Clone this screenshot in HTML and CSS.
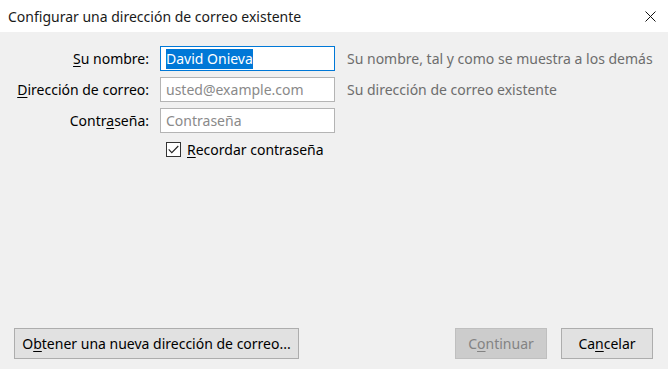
FILE: index.html
```html
<!DOCTYPE html>
<html lang="es">
<head>
    <meta charset="UTF-8">
    <title>Configurar una dirección de correo existente</title>
    <link rel="stylesheet" href="styles.css">
</head>
<body>
    <div class="dialog">
        <div class="dialog-title">
            <span>Configurar una dirección de correo existente</span>
            <button class="close-btn" aria-label="Cerrar">
                <svg width="11" height="11" viewBox="0 0 11 11">
                    <path d="M0.5 0.5 L10.5 10.5 M10.5 0.5 L0.5 10.5" stroke="#111" stroke-width="1" fill="none"/>
                </svg>
            </button>
        </div>

        <div class="dialog-body">
            <div class="account-form">
                <label class="field-label"><u>S</u>u nombre:</label>
                <div class="text-input focused"><span class="selection">David Onieva</span></div>
                <div class="field-hint">Su nombre, tal y como se muestra a los demás</div>

                <label class="field-label"><u>D</u>irección de correo:</label>
                <div class="text-input placeholder">usted@example.com</div>
                <div class="field-hint">Su dirección de correo existente</div>

                <label class="field-label">Contr<u>a</u>seña:</label>
                <div class="text-input placeholder">Contraseña</div>
                <div></div>

                <div></div>
                <label class="remember">
                    <span class="checkbox">
                        <svg width="11" height="9" viewBox="0 0 11 9">
                            <path d="M0.7 4.4 L3.8 7.6 L10.3 1" stroke="#222" stroke-width="1.1" fill="none"/>
                        </svg>
                    </span>
                    <span><u>R</u>ecordar contraseña</span>
                </label>
            </div>

            <div class="dialog-footer">
                <button class="btn btn-wide">O<u>b</u>tener una nueva dirección de correo...</button>
                <div class="footer-right">
                    <button class="btn" disabled>C<u>o</u>ntinuar</button>
                    <button class="btn">Ca<u>n</u>celar</button>
                </div>
            </div>
        </div>
    </div>
</body>
</html>
```

FILE: styles.css
```css
body {
    margin: 0;
    font-family: "Noto Sans", "Open Sans", sans-serif;
    font-size: 14px;
    color: #000;
    background-color: #f0f0f0;
}

u {
    text-decoration-thickness: 1px;
    text-underline-offset: 2px;
}

.dialog {
    width: 668px;
    height: 369px;
    display: flex;
    flex-direction: column;
}

.dialog-title {
    height: 32px;
    flex-shrink: 0;
    background-color: #fff;
    display: flex;
    align-items: center;
    justify-content: space-between;
    padding-left: 8px;
    font-size: 14px;
    color: #1a1a1a;
}

.close-btn {
    width: 36px;
    height: 32px;
    border: none;
    background: none;
    padding: 0;
    display: flex;
    align-items: center;
    justify-content: center;
}

.dialog-body {
    flex-grow: 1;
    display: flex;
    flex-direction: column;
    padding: 14px 15px 10px 14px;
}

.account-form {
    display: grid;
    grid-template-columns: 135px 175px auto;
    grid-auto-rows: 25px;
    column-gap: 11px;
    row-gap: 6px;
    align-items: center;
}

.field-label {
    text-align: right;
    white-space: nowrap;
}

.text-input {
    height: 25px;
    box-sizing: border-box;
    border: 1px solid #b4b4b4;
    background-color: #fff;
    padding: 0 5px;
    display: flex;
    align-items: center;
    white-space: nowrap;
    overflow: hidden;
}

.text-input.focused {
    border-color: #0078d7;
}

.text-input.placeholder {
    color: #8a8a8a;
}

.selection {
    background-color: #0078d7;
    color: #fff;
    line-height: 20px;
}

.field-hint {
    padding-left: 1px;
    color: #6d6d6d;
    white-space: nowrap;
}

.remember {
    display: flex;
    align-items: center;
    gap: 6px;
    padding-left: 6px;
    margin-top: -4px;
}

.checkbox {
    width: 13px;
    height: 13px;
    border: 1px solid #333;
    background-color: #fff;
    display: flex;
    align-items: center;
    justify-content: center;
}

.dialog-footer {
    margin-top: auto;
    display: flex;
    justify-content: space-between;
}

.footer-right {
    display: flex;
    gap: 14px;
}

.btn {
    height: 31px;
    min-width: 92px;
    border: 1px solid #adadad;
    background-color: #e1e1e1;
    font-family: inherit;
    font-size: 14px;
    color: #000;
    padding: 0 8px;
    white-space: nowrap;
}

.btn-wide {
    width: 285px;
    padding: 0;
}

.btn:disabled {
    background-color: #cccccc;
    border-color: #bfbfbf;
    color: #838383;
}
```
